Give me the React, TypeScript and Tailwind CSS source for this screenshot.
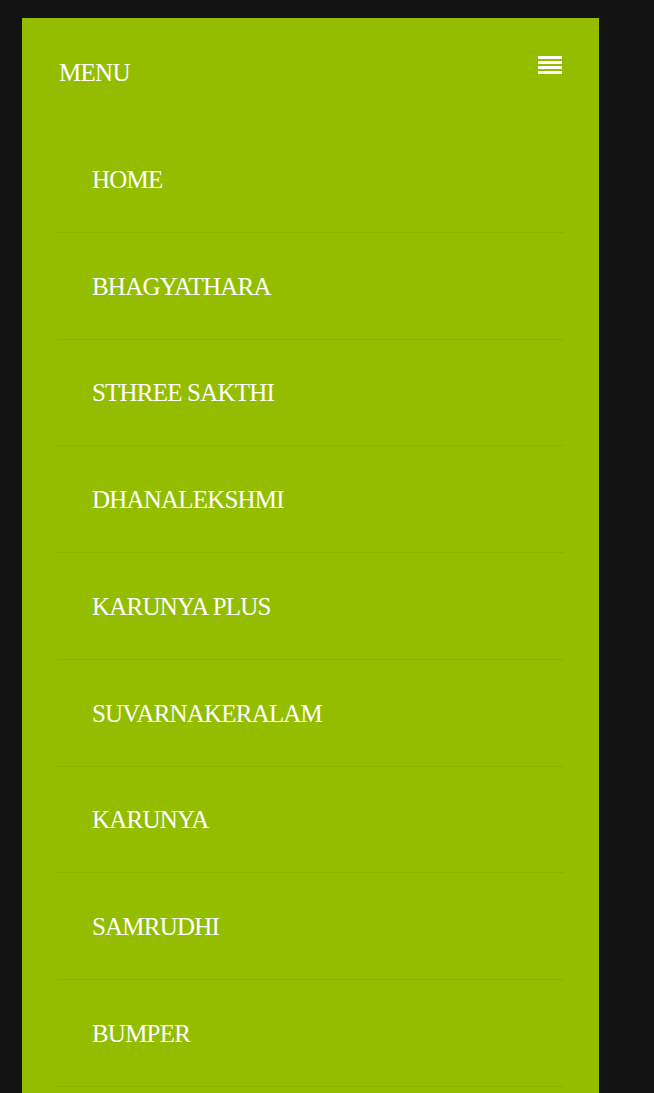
import React from "react";

const items = [
  "HOME",
  "BHAGYATHARA",
  "STHREE SAKTHI",
  "DHANALEKSHMI",
  "KARUNYA PLUS",
  "SUVARNAKERALAM",
  "KARUNYA",
  "SAMRUDHI",
  "BUMPER",
];

export default function App() {
  return (
    <div className="h-[1093px] overflow-hidden bg-[#121212] pt-[18px] pl-[22px] pr-[55px]">
      <div
        className="bg-[#94bd00] text-white"
        style={{ fontFamily: '"Liberation Serif", serif' }}
      >
        <div className="flex h-[108px] items-start justify-between pl-[37px] pr-[37px]">
          <span className="mt-[40px] text-[25px] leading-[30px] tracking-[-0.7px]">MENU</span>
          <svg width="24" height="18" viewBox="0 0 24 18" className="mt-[38px]">
            <rect x="0" y="0" width="24" height="3" fill="#fff" />
            <rect x="0" y="5" width="24" height="3" fill="#fff" />
            <rect x="0" y="10" width="24" height="3" fill="#fff" />
            <rect x="0" y="15" width="24" height="3" fill="#fff" />
          </svg>
        </div>
        <ul className="ml-[36px] mr-[35px] pb-[40px]">
          {items.map((it) => (
            <li
              key={it}
              className="flex h-[106.75px] items-center border-b border-[#8ab200] pl-[34px] pt-[2px]"
            >
              <span className="text-[25px] leading-[30px] tracking-[-0.8px]">{it}</span>
            </li>
          ))}
        </ul>
      </div>
    </div>
  );
}
